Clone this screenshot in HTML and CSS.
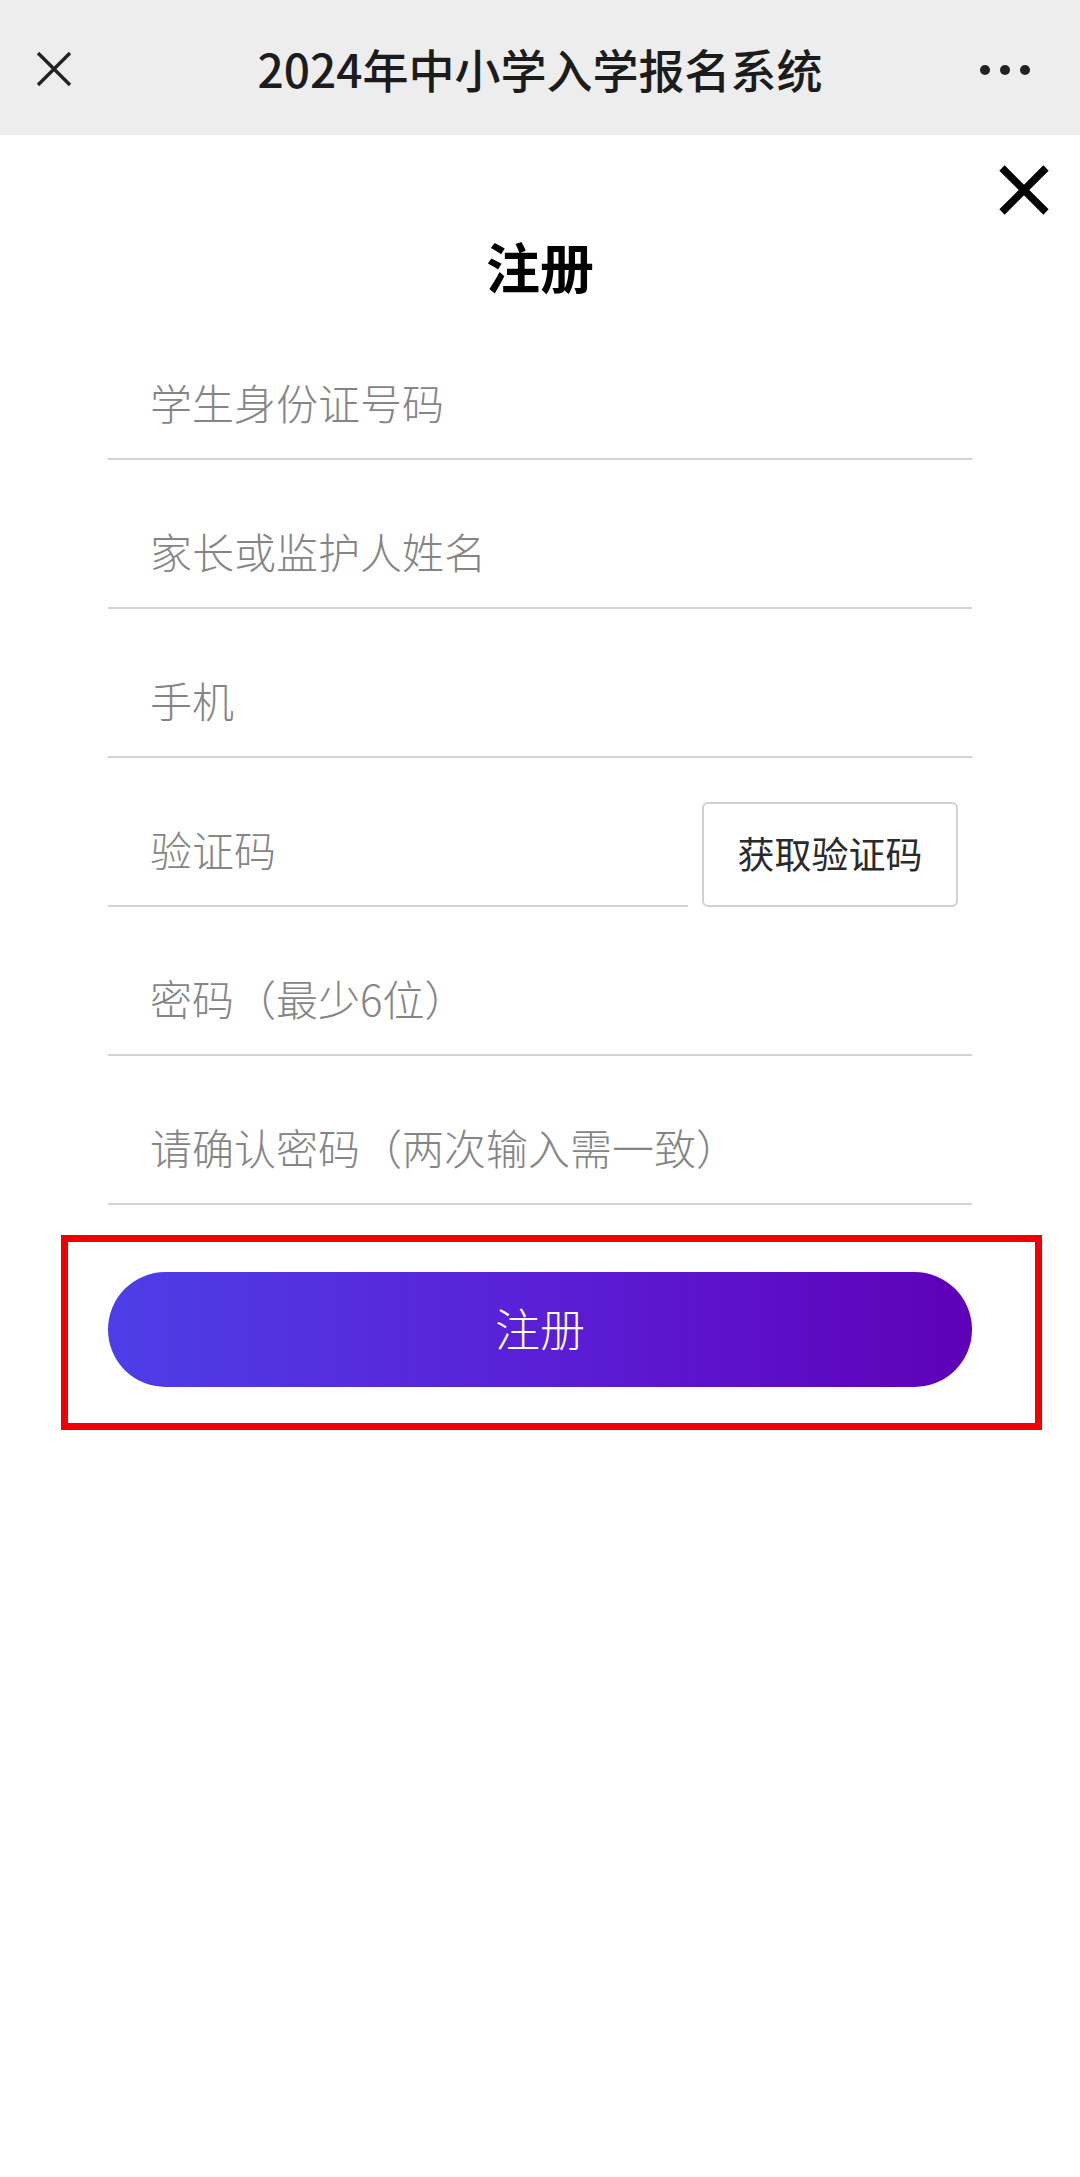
FILE: index.html
```html
<!DOCTYPE html>
<html lang="zh-CN">
<head>
<meta charset="utf-8">
<title>2024年中小学入学报名系统</title>
<link rel="stylesheet" href="styles.css">
</head>
<body>
<header class="topbar">
  <div class="topbar-left">
    <svg class="nav-close" width="36" height="34" viewBox="0 0 36 34"><path d="M2 1 L34 33 M34 1 L2 33" stroke="#222" stroke-width="3.4" fill="none"/></svg>
  </div>
  <div class="topbar-title">2024年中小学入学报名系统</div>
  <div class="topbar-right">
    <span class="dot"></span><span class="dot"></span><span class="dot"></span>
  </div>
</header>
<main class="page">
  <div class="close-row">
    <svg class="modal-close" width="50" height="50" viewBox="0 0 50 50"><path d="M3 3 L47 47 M47 3 L3 47" stroke="#000" stroke-width="7.5" fill="none"/></svg>
  </div>
  <h1 class="heading">注册</h1>
  <form class="form">
    <div class="field"><input class="input" type="text" placeholder="学生身份证号码"></div>
    <div class="field"><input class="input" type="text" placeholder="家长或监护人姓名"></div>
    <div class="field"><input class="input" type="text" placeholder="手机"></div>
    <div class="field-row">
      <div class="field field-grow"><input class="input" type="text" placeholder="验证码"></div>
      <button type="button" class="code-btn">获取验证码</button>
    </div>
    <div class="field"><input class="input" type="password" placeholder="密码（最少6位）"></div>
    <div class="field"><input class="input" type="password" placeholder="请确认密码（两次输入需一致）"></div>
    <div class="highlight">
      <button type="button" class="submit-btn">注册</button>
    </div>
  </form>
</main>
</body>
</html>
```
FILE: styles.css
```css
html, body {
  margin: 0;
  padding: 0;
  background: #ffffff;
}
body {
  font-family: "Noto Sans CJK SC", "Noto Sans", sans-serif;
  color: #1a1a1a;
  min-height: 2177px;
}
.topbar {
  height: 135px;
  background: #ededed;
  display: grid;
  grid-template-columns: 1fr auto 1fr;
  align-items: center;
}
.topbar-left {
  padding-left: 36px;
  display: flex;
  align-items: center;
  padding-top: 2px;
}
.nav-close { display: block; }
.topbar-title {
  font-size: 46px;
  font-weight: 500;
  color: #1c1c1c;
  line-height: 60px;
  letter-spacing: 0;
}
.topbar-right {
  display: flex;
  justify-content: flex-end;
  gap: 10px;
  padding-right: 50px;
  padding-top: 4px;
}
.dot {
  width: 10px;
  height: 10px;
  border-radius: 50%;
  background: #222;
}
.page {
  display: flex;
  flex-direction: column;
}
.close-row {
  display: flex;
  justify-content: flex-end;
  padding-top: 30px;
  padding-right: 31px;
}
.modal-close { display: block; }
.heading {
  margin: 21px 0 0;
  text-align: center;
  font-size: 54px;
  font-weight: 700;
  line-height: 60px;
  color: #000;
}
.form {
  width: 864px;
  margin: 0 auto;
  display: flex;
  flex-direction: column;
}
.field {
  margin-top: 37px;
  border-bottom: 2px solid #d4d4d4;
}
.form > .field:first-child {
  margin-top: 52px;
}
.input {
  display: block;
  box-sizing: border-box;
  width: 100%;
  height: 110px;
  border: 0;
  outline: none;
  background: transparent;
  padding: 0 0 4px 42px;
  margin: 0;
  font-family: "Noto Sans CJK SC", "Noto Sans", sans-serif;
  font-size: 42px;
  font-weight: 300;
  color: #333;
}
.input::placeholder {
  color: #858585;
  opacity: 1;
}
.field-row {
  display: flex;
  align-items: flex-end;
  gap: 14px;
  padding-right: 14px;
}
.field-grow {
  flex: 1;
}
.code-btn {
  width: 256px;
  height: 105px;
  box-sizing: border-box;
  border: 2px solid #d0d0d0;
  border-radius: 6px;
  background: #fff;
  font-family: "Noto Sans CJK SC", "Noto Sans", sans-serif;
  font-size: 37px;
  font-weight: 400;
  color: #2a2a2a;
  padding: 0 0 4px;
}
.highlight {
  margin: 30px -70px 0 -47px;
  padding: 30px 63px 36px 40px;
  border: 7px solid #f00000;
}
.submit-btn {
  display: block;
  width: 100%;
  height: 115px;
  border: 0;
  border-radius: 58px;
  background: linear-gradient(to right, #4d3ee8, #5a1fd6 50%, #5e00b8);
  color: #fff;
  font-family: "Noto Sans CJK SC", "Noto Sans", sans-serif;
  font-size: 45px;
  font-weight: 300;
  padding: 0 0 4px;
}
```
